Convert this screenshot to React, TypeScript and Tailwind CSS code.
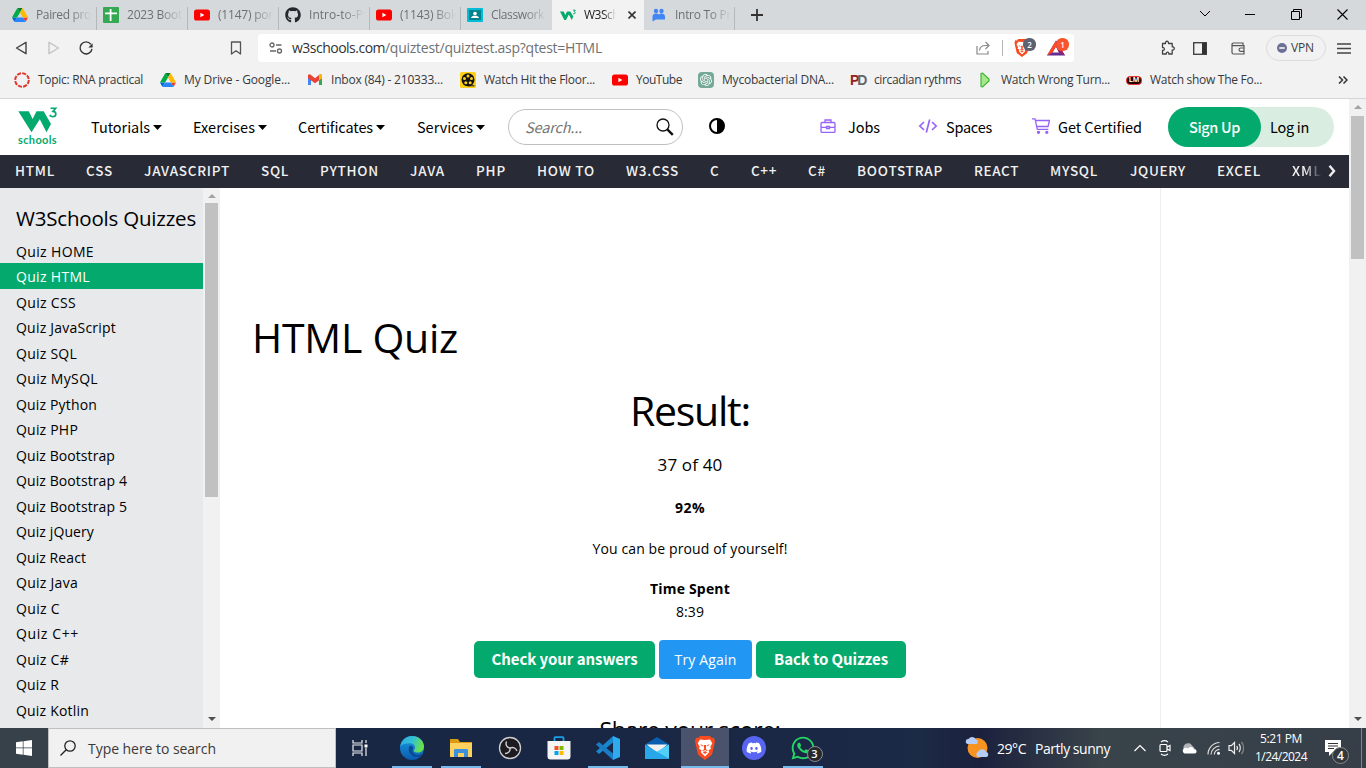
import React, { useLayoutEffect, useRef, useState } from "react";
import { FaGithub, FaDiscord, FaWhatsapp } from "react-icons/fa";
import { SiOpenai } from "react-icons/si";

const UI = "font-['Open_Sans','Noto_Sans',sans-serif]";
const SRC = "font-['Noto_Sans_CJK_SC','Noto_Sans',sans-serif]";

/* Single-line label whose tracking is adjusted so that it fills a given width. */
function T({ w, c = "", children }: { w: number; c?: string; children: string }) {
  const ref = useRef<HTMLSpanElement>(null);
  const [ls, setLs] = useState<number | null>(null);
  useLayoutEffect(() => {
    const el = ref.current;
    if (!el || ls !== null) return;
    setLs((w - el.getBoundingClientRect().width) / children.length);
  }, [ls, w, children]);
  return (
    <span className="block shrink-0 overflow-visible whitespace-nowrap" style={{ width: w }}>
      <span ref={ref} className={`block w-max whitespace-nowrap ${c}`} style={ls === null ? undefined : { letterSpacing: ls }}>
        {children}
      </span>
    </span>
  );
}

const Drive = () => (
  <svg viewBox="0 0 87.3 78" className="h-[14px] w-4 shrink-0">
    <path fill="#0066da" d="m6.6 66.85 3.85 6.65c.8 1.4 1.95 2.5 3.3 3.3l13.75-23.8h-27.5c0 1.55.4 3.1 1.2 4.5z" />
    <path fill="#00ac47" d="m43.65 25-13.75-23.8c-1.35.8-2.5 1.9-3.3 3.3l-25.4 44a9.06 9.06 0 0 0 -1.2 4.5h27.5z" />
    <path fill="#ea4335" d="m73.55 76.8c1.35-.8 2.5-1.9 3.3-3.3l1.6-2.75 7.65-13.25c.8-1.4 1.2-2.95 1.2-4.5h-27.502l5.852 11.5z" />
    <path fill="#00832d" d="m43.65 25 13.75-23.8c-1.35-.8-2.9-1.2-4.5-1.2h-18.5c-1.6 0-3.15.45-4.5 1.2z" />
    <path fill="#2684fc" d="m59.8 53h-32.3l-13.75 23.8c1.35.8 2.9 1.2 4.5 1.2h50.8c1.6 0 3.15-.45 4.5-1.2z" />
    <path fill="#ffba00" d="m73.4 26.5-12.7-22c-.8-1.4-1.95-2.5-3.3-3.3l-13.75 23.8 16.15 28h27.45c0-1.55-.4-3.1-1.2-4.5z" />
  </svg>
);
const YouTube = () => (
  <svg viewBox="0 0 16 16" className="h-4 w-4 shrink-0"><rect y="2.5" width="16" height="11" rx="2.6" fill="#f00" /><path d="M6.4 5.7v4.6L10.4 8z" fill="#fff" /></svg>
);
const Sheets = () => (
  <svg viewBox="0 0 16 16" className="h-4 w-4 shrink-0"><rect width="16" height="16" rx="1" fill="#34a853" /><path d="M2 6.300h12M7.600 2v12" stroke="#fff" strokeWidth="1.800" /></svg>
);
const Classroom = () => (
  <svg viewBox="0 0 16 16" className="h-4 w-4 shrink-0"><rect y="1" width="16" height="14" rx="1" fill="#00bcd4" /><rect x="2" y="3" width="12" height="10" fill="#00838f" /><circle cx="8" cy="6.5" r="1.8" fill="#fff" /><path d="M4 11c.3-1.700 2-2.300 4-2.300s3.700.6 4 2.300z" fill="#fff" /></svg>
);
const W3Fav = () => (
  <svg viewBox="0 0 16 16" className="h-4 w-4 shrink-0"><path d="M0 4.500h3.700L5.300 8 7 4.500h3.200L13.300 9.500 11.800 13 8.800 7.500 6 13H4.300z" fill="#04aa6d" /><path d="M13 3.200h2.300l-1.200 1.500c1.600.1 1.500 2.100.1 2.100-.7 0-1.100-.3-1.300-.6" fill="none" stroke="#04aa6d" strokeWidth="1" /></svg>
);
const People = () => (
  <svg viewBox="0 0 16 16" className="h-4 w-4 shrink-0" fill="#4285f4"><circle cx="5" cy="4" r="2.200" /><circle cx="10.500" cy="4" r="2.200" /><path d="M1.500 9.500c0-2 1.500-3 3.500-3s2.500.7 2.800 1.200c.4-.5 1-1.200 2.800-1.200s3.400 1 3.400 3V12.500H5l-3.500 2z" /></svg>
);
const Lion = ({ c }: { c: string }) => (
  <svg viewBox="0 0 20 24" className={c}><path d="M5 0h10l1.800 2L19 1.800 20 5l-.5 2.500-2.200 10c-.3 1-.8 1.600-1.600 2.200L10 24l-5.700-4.300c-.8-.6-1.300-1.200-1.600-2.200L.5 7.500 0 5l1-3.200 2.200.2z" fill="#fb4a1e" /><path d="M10 4l5-.5 2.300 3.800-2 3.500.7 2-2.500 1.500.7 2L10 20.500 5.800 16.300l.7-2L4 12.800l.7-2-2-3.500L5 3.500z" fill="#fff" /><path d="M5 8l3 1.200-.5 1.300zM15 8l-3 1.200.5 1.300zM8.800 9h2.400l-.3 4L13 15l-3-.8L7 15l2.100-2zM7.500 16l2.500-.8 2.500.8-2.500 2z" fill="#fb4a1e" /></svg>
);

const tabs: { icon: React.ReactNode; text: string; w: number }[] = [
  { icon: <Drive />, text: "Paired prog", w: 61 },
  { icon: <Sheets />, text: "2023 Boot", w: 55 },
  { icon: <YouTube />, text: "(1147) por", w: 55 },
  { icon: <FaGithub className="h-4 w-4 shrink-0 text-[#24292f]" />, text: "Intro-to-Py", w: 60 },
  { icon: <YouTube />, text: "(1143) Bok", w: 57 },
  { icon: <Classroom />, text: "Classwork", w: 53 },
];
const fade = "h-full flex items-center overflow-hidden pb-px [mask-image:linear-gradient(to_right,black_60%,transparent)]";

function TabBar() {
  return (
    <div className="flex h-[30px] shrink-0 bg-[#d5d9dc] pl-1.5">
      {tabs.map((t, i) => (
        <div key={i} className="flex w-[91px] items-center pl-1.5">
          {t.icon}
          <div className={`${fade} ml-2 w-[56px] text-[#6c7074]`}><T w={t.w} c="text-[12px]">{t.text}</T></div>
          <div className={i === 5 ? "" : "ml-auto mt-[7px] h-[23px] w-px self-start bg-[#b4b8bb]"} />
        </div>
      ))}
      <div className="flex w-[92px] items-center bg-[#f2f2f2] pl-2">
        <W3Fav />
        <div className={`${fade} ml-2 w-8 text-[#222]`}><T w={42} c="text-[12px]">W3Scho</T></div>
        <svg viewBox="0 0 8 8" className="ml-3 h-2 w-2" stroke="#333" strokeWidth="1.600"><path d="M.5.5l7 7M7.500.5l-7 7" /></svg>
      </div>
      <div className="flex w-[91px] items-center pl-[7px]">
        <People />
        <div className={`${fade} ml-2 w-[56px] text-[#6c7074]`}><T w={63} c="text-[12px]">Intro To Pro</T></div>
        <div className="ml-auto mt-[7px] h-[23px] w-px self-start bg-[#b4b8bb]" />
      </div>
      <svg viewBox="0 0 12 12" className="ml-[16px] mt-[9px] h-3 w-3" stroke="#333" strokeWidth="1.800"><path d="M6 0v12M0 6h12" /></svg>
      <div className="ml-auto mt-[8px] flex h-3 items-center text-black">
        <svg viewBox="0 0 12 12" className="mr-[34px] h-3 w-3" fill="none" stroke="currentColor"><path d="M1 3l5 5 5-5" /></svg>
        <svg viewBox="0 0 10 10" className="mr-[36px] h-2.5 w-2.5" stroke="currentColor"><path d="M0 5.500h10" /></svg>
        <svg viewBox="0 0 11 11" className="mr-[35px] h-[11px] w-[11px]" fill="none" stroke="currentColor"><path d="M.5 2.500h8v8h-8zM2.500 2.500v-2h8v8h-2" /></svg>
        <svg viewBox="0 0 11 11" className="mr-[18px] h-[11px] w-[11px]" stroke="currentColor" strokeWidth="1.100"><path d="M.5.5l10 10M10.500.5l-10 10" /></svg>
      </div>
    </div>
  );
}

function Toolbar() {
  return (
    <div className="flex h-[36px] shrink-0 items-center text-[#3b3f43]">
      <svg viewBox="0 0 14 16" className="ml-[15px] h-4 w-[14px]" fill="none" stroke="#444" strokeWidth="1.400" strokeLinejoin="round"><path d="M1.500 8L11 2.300v11.400z" /></svg>
      <svg viewBox="0 0 14 16" className="ml-[18px] h-4 w-[14px]" fill="none" stroke="#c4c4c4" strokeWidth="1.400" strokeLinejoin="round"><path d="M2 2.300L11.500 8 2 13.700z" /></svg>
      <svg viewBox="0 0 16 16" className="ml-[17px] h-4 w-4" fill="none" stroke="#333" strokeWidth="1.400"><path d="M12.800 4.200A6 6 0 1 0 14 8.800" /><path d="M14.600 3.300v4.200h-4.200z" fill="#333" stroke="none" /></svg>
      <svg viewBox="0 0 12 14" className="ml-[136px] h-[14px] w-3" fill="none" stroke="#555" strokeWidth="1.300" strokeLinejoin="round"><path d="M1.500 1h9v12L6 9.800 1.500 13z" /></svg>
      <div className="ml-4 flex h-7 w-[816px] items-center rounded bg-white">
        <svg viewBox="0 0 14 12" className="ml-[11px] h-3 w-[14px]" fill="none" stroke="#666" strokeWidth="1.300"><circle cx="3" cy="3" r="2" /><path d="M7 3h5.500M1 9h6" /><circle cx="10.500" cy="9" r="2" /></svg>
        <div className="ml-[9px] flex pb-px text-[14px]">
          <T w={93} c="text-[#303336]">w3schools.com</T>
          <T w={217} c="text-[#6f7275]">/quiztest/quiztest.asp?qtest=HTML</T>
        </div>
        <svg viewBox="0 0 14 14" className="ml-[374px] h-[14px] w-[14px]" fill="none" stroke="#888" strokeWidth="1.200"><path d="M1 5v8h11V10M3.500 9.500c.3-3 2.500-5 6-5H13M9.500 1L13 4.500 9.500 8" /></svg>
        <div className="ml-3 h-4 w-px bg-[#b5b5b5]" />
        <div className="relative ml-[11px] h-[18px] w-[18px]">
          <Lion c="h-[18px] w-4" />
          <span className="absolute -top-px left-[9px] flex h-[13px] w-[13px] items-center justify-center rounded-md bg-[#5d6170] text-[8px] font-semibold text-white">2</span>
        </div>
        <div className="relative ml-[15px] h-[18px] w-[18px]">
          <svg viewBox="0 0 18 18" className="h-[18px] w-[18px]"><path d="M9 1.500L0 16.500h18L14 10l-5-8.500zM9 7.500l3 6H5.500z" fill="#662d91" fillRule="evenodd" /><path d="M9 1.500L0 16.500l5.500-3L9 7.500z" fill="#ff4724" /><path d="M9 1.500L18 16.500l-6-3-3-6z" fill="#9e1f63" /></svg>
          <span className="absolute -top-px left-[9px] flex h-[13px] w-[13px] items-center justify-center rounded-md bg-[#fb542b] text-[8px] font-semibold text-white">1</span>
        </div>
      </div>
      <svg viewBox="0 0 16 16" className="ml-[86px] h-4 w-4" fill="none" stroke="#444" strokeWidth="1.300" strokeLinejoin="round"><path d="M2.500 3.500h3c-.6-3 3.600-3 3 0h3.700v3.300c2.800-.5 2.800 3.700 0 3.200v4H8.800c.4-2.500-2.900-2.500-2.500 0H2.500v-3.500c2.500.3 2.500-3.300 0-3z" /></svg>
      <svg viewBox="0 0 14 13" className="ml-[17px] h-[13px] w-[14px]"><rect x=".7" y=".7" width="12.600" height="11.600" fill="none" stroke="#444" strokeWidth="1.400" /><path d="M9 1h4.500v11H9z" fill="#333" /></svg>
      <svg viewBox="0 0 14 13" className="ml-[24px] h-[13px] w-[14px]" fill="none" stroke="#555" strokeWidth="1.200"><path d="M12 3.500V1H2.300a1.300 1.300 0 0 0 0 2.600H13V12H2.500A1.500 1.500 0 0 1 1 10.500V2.500M13.500 6H9.700a1.600 1.600 0 0 0 0 3.300h3.800" /></svg>
      <div className="ml-[21px] flex h-[26px] w-[60px] items-center rounded-full border border-[#dcdcdc] pl-[10px]">
        <svg viewBox="0 0 10 10" className="h-[10px] w-[10px]"><circle cx="5" cy="5" r="5" fill="#6b7095" /><path d="M2.300 5h5.400" stroke="#fff" strokeWidth="1.500" /></svg>
        <div className="ml-1"><T w={23} c="text-[12px]">VPN</T></div>
      </div>
      <svg viewBox="0 0 14 11" className="ml-[11px] h-[11px] w-[14px]" stroke="#444" strokeWidth="1.300"><path d="M0 1h14M0 5.500h14M0 10h14" /></svg>
    </div>
  );
}

const marks: { icon: React.ReactNode; text: string; w: number; cell: string }[] = [
  { icon: <svg viewBox="0 0 16 16" className="h-4 w-4"><circle cx="8" cy="8" r="6.800" fill="none" stroke="#e0352b" strokeWidth="2" strokeDasharray="4.100 1.240" /></svg>, text: "Topic: RNA practical", w: 105, cell: "w-[146px]" },
  { icon: <Drive />, text: "My Drive - Google...", w: 106, cell: "w-[147px]" },
  { icon: <svg viewBox="0 0 16 16" className="h-4 w-4"><path d="M1 3.500v9.500h3V7z" fill="#4285f4" /><path d="M12 13h3V3.500L12 7z" fill="#34a853" /><path d="M1 3v3.300l7 5 7-5V3c-1-1.200-2-.8-2.700-.2L8 6.200 3.700 2.800C2.800 2 1.500 2 1 3z" fill="#ea4335" /><path d="M12 3l1-.600c1-.4 2 .2 2 1.300v2.500l-3 2.300z" fill="#fbbc04" /></svg>, text: "Inbox (84) - 210333...", w: 112, cell: "w-[153px]" },
  { icon: <svg viewBox="0 0 16 16" className="h-4 w-4"><rect width="16" height="16" rx="1.500" fill="#fdd017" /><circle cx="8" cy="7.800" r="6.500" fill="#111" /><g fill="#fdd017"><circle cx="8" cy="4" r="1.500" /><circle cx="4.500" cy="6.600" r="1.500" /><circle cx="11.500" cy="6.600" r="1.500" /><circle cx="5.800" cy="10.800" r="1.500" /><circle cx="10.200" cy="10.800" r="1.500" /></g><path d="M8 13.300h6.500v1H8z" fill="#111" /></svg>, text: "Watch Hit the Floor...", w: 111, cell: "w-[152px]" },
  { icon: <YouTube />, text: "YouTube", w: 46, cell: "w-[86px]" },
  { icon: <span className="flex h-4 w-4 items-center justify-center rounded-sm bg-[#74a897]"><SiOpenai className="h-3 w-3 text-white" /></span>, text: "Mycobacterial DNA...", w: 112, cell: "w-[152px]" },
  { icon: <span className="flex h-4 w-4 items-center text-[14px] leading-none font-black tracking-[-2px] font-['Liberation_Sans',sans-serif]"><i className="not-italic text-[#98201c]">P</i><i className="not-italic text-[#666]">D</i></span>, text: "circadian rythms", w: 87, cell: "w-[127px]" },
  { icon: <svg viewBox="0 0 16 16" className="h-4 w-4"><path d="M4 1.500l1.500-.5L12 7v2l-6.500 6L4 14.500z" fill="#a5e887" stroke="#35b135" strokeWidth="1.100" /></svg>, text: "Watch Wrong Turn...", w: 109, cell: "w-[149px]" },
  { icon: <span className="flex h-[9px] w-4 items-center justify-center rounded-sm border border-[#e33] bg-[#200] text-[7px] font-bold text-white">LM</span>, text: "Watch show The Fo...", w: 112, cell: "w-[212px]" },
];

function Bookmarks() {
  return (
    <div className="flex h-[28px] shrink-0 items-center pl-[14px] text-[#37393c]">
      {marks.map((m, i) => (
        <div key={i} className={`${m.cell} flex shrink-0 items-center gap-2`}>
          {m.icon}
          <div className="pb-px"><T w={m.w} c="text-[12px]">{m.text}</T></div>
        </div>
      ))}
      <svg viewBox="0 0 10 8" className="h-2 w-2.5" fill="none" stroke="#333" strokeWidth="1.500"><path d="M1 .5L4.500 4 1 7.500M5.500.5L9 4 5.500 7.500" /></svg>
    </div>
  );
}

const Caret = () => <svg viewBox="0 0 9 5" className="ml-[3px] mt-px h-[5px] w-[9px]"><path d="M0 0h9L4.500 5z" /></svg>;
const menus: [string, number, string][] = [
  ["Tutorials", 59, "w-[102px]"],
  ["Exercises", 62, "w-[105px]"],
  ["Certificates", 75, "w-[119px]"],
  ["Services", 56, "w-[91px]"],
];

function SiteNav() {
  return (
    <div className={`${SRC} flex h-[56px] w-full shrink-0 items-center bg-white text-[14.500px] text-black`}>
      <div className="ml-[18px] flex w-[73px] flex-col pb-0.5">
        <svg viewBox="0 0 40 26" className="h-[26px] w-10"><path d="M.3 4.300h10.500l3.800 7.700 3.900-7.700h7.200L33 17l-4.500 8.300L21.800 12.300 13.500 25.300z" fill="#04aa6d" /><path d="M32.500 1.200h5.200l-2.800 3.200c4.200.3 3.700 5.300-.1 5.300-1.700 0-2.600-.8-3.100-1.700" fill="none" stroke="#04aa6d" strokeWidth="1.600" /></svg>
        <T w={39} c="font-['Lato',sans-serif] text-[11px] leading-[13px] font-bold text-[#04aa6d]">schools</T>
      </div>
      {menus.map(([t, w, cell]) => (
        <div key={t} className={`${cell} flex shrink-0 items-center`}><T w={w}>{t}</T><Caret /></div>
      ))}
      <div className="flex h-9 w-[175px] items-center justify-between rounded-full border border-[#bfbfbf] pr-2 pl-4">
        <T w={57} c="text-[#757575] italic">Search...</T>
        <svg viewBox="0 0 18 18" className="h-[18px] w-[18px]" fill="none" stroke="#111"><circle cx="7" cy="7" r="6" strokeWidth="1.300" /><path d="M11.300 11.300l5.500 5.500" strokeWidth="2.400" /></svg>
      </div>
      <svg viewBox="0 0 16 16" className="mb-[3px] ml-[26px] h-4 w-4"><circle cx="8" cy="8" r="7" fill="none" stroke="#000" strokeWidth="2" /><path d="M8 1a7 7 0 0 1 0 14z" /></svg>
      <svg viewBox="0 0 16 14" className="mb-[3px] ml-[95px] h-[14px] w-4" fill="none" stroke="#9763f6" strokeWidth="1.300"><rect x="1" y="3.500" width="14" height="10" rx="1.200" /><path d="M5 3.500V1h6v2.500M1 8.300h5.500M9.500 8.300H15M6.500 7.500h3v2h-3z" /></svg>
      <div className="ml-[12px] w-[70px]"><T w={32}>Jobs</T></div>
      <svg viewBox="0 0 20 14" className="mb-[3px] h-[14px] w-5" fill="none" stroke="#9763f6" strokeWidth="1.700"><path d="M6 3L1.800 7 6 11M14 3l4.200 4-4.200 4M11.700.5l-3.400 13" /></svg>
      <div className="ml-[8px] w-[86px]"><T w={46}>Spaces</T></div>
      <svg viewBox="0 0 18 16" className="mb-[2px] h-4 w-[18px]" fill="none" stroke="#9763f6" strokeWidth="1.300"><path d="M0 .8h3l2.300 10.500h11M3.500 2.500h14L16 8.500H4.800" /><circle cx="6.500" cy="14.300" r="1" fill="#9763f6" /><circle cx="14.800" cy="14.300" r="1" fill="#9763f6" /></svg>
      <div className="ml-[8px] w-[110px]"><T w={84}>Get Certified</T></div>
      <div className="flex h-10 w-[166px] rounded-full bg-[#d9eee1]">
        <div className="flex w-[93px] items-center rounded-full bg-[#04aa6d] pl-[21px] font-medium text-white"><T w={51}>Sign Up</T></div>
        <div className="flex items-center pl-[9px]"><T w={39}>Log in</T></div>
      </div>
    </div>
  );
}

const topics: [string, number, string][] = [
  ["HTML", 40, "w-[71px]"], ["CSS", 27, "w-[58px]"], ["JAVASCRIPT", 86, "w-[117px]"], ["SQL", 28, "w-[59px]"],
  ["PYTHON", 59, "w-[90px]"], ["JAVA", 35, "w-[66px]"], ["PHP", 30, "w-[61px]"], ["HOW TO", 58, "w-[89px]"],
  ["W3.CSS", 53, "w-[84px]"], ["C", 9, "w-[41px]"], ["C++", 26, "w-[57px]"], ["C#", 18, "w-[49px]"],
  ["BOOTSTRAP", 86, "w-[117px]"], ["REACT", 45, "w-[76px]"], ["MYSQL", 48, "w-[80px]"], ["JQUERY", 56, "w-[87px]"],
  ["EXCEL", 44, "w-[75px]"],
];

function TopicBar() {
  return (
    <div className={`${SRC} flex h-[33px] w-full shrink-0 items-center overflow-hidden bg-[#282a35] pb-0.5 pl-[15px] text-[13.500px] font-medium text-[#f1f1f1]`}>
      {topics.map(([t, w, cell]) => <div key={t} className={`${cell} shrink-0`}><T w={w}>{t}</T></div>)}
      <div className="w-[30px] shrink-0 overflow-hidden [mask-image:linear-gradient(to_right,black_40%,transparent)]"><T w={30}>XML</T></div>
      <svg viewBox="0 0 8 12" className="ml-1.5 h-3 w-2 shrink-0" fill="none" stroke="#eee" strokeWidth="2.400"><path d="M1.500.8L6 6l-4.500 5.200" /></svg>
    </div>
  );
}

const quizzes: [string, number][] = [
  ["Quiz HOME", 78], ["Quiz HTML", 74], ["Quiz CSS", 60], ["Quiz JavaScript", 100], ["Quiz SQL", 61], ["Quiz MySQL", 82],
  ["Quiz Python", 81], ["Quiz PHP", 62], ["Quiz Bootstrap", 99], ["Quiz Bootstrap 4", 111], ["Quiz Bootstrap 5", 111],
  ["Quiz jQuery", 78], ["Quiz React", 70], ["Quiz Java", 62], ["Quiz C", 44], ["Quiz C++", 63], ["Quiz C#", 53],
  ["Quiz R", 43], ["Quiz Kotlin", 73], ["Quiz Sass", 64],
];

function Scrollbar({ thumb }: { thumb: string }) {
  return (
    <div className="flex w-[17px] shrink-0 flex-col items-center bg-[#f1f1f1]">
      <svg viewBox="0 0 8 4" className="mt-[6px] mb-[5px] h-1 w-2 shrink-0" fill="#a3a3a3"><path d="M0 4h8L4 0z" /></svg>
      <div className={`w-[13px] shrink-0 bg-[#c1c1c1] ${thumb}`} />
      <svg viewBox="0 0 8 4" className="mt-auto mb-[7px] h-1 w-2 shrink-0" fill="#505050"><path d="M0 0h8L4 4z" /></svg>
    </div>
  );
}

function Sidebar() {
  return (
    <div className="w-[203px] shrink-0 overflow-hidden bg-[#e7e9eb] text-black">
      <div className="flex h-[49.500px] items-end pb-[5px] pl-4"><T w={180} c="text-[20.500px] leading-[30px]">W3Schools Quizzes</T></div>
      {quizzes.map(([t, w], i) => (
        <div key={t} className={`flex h-[25.500px] items-center pt-[1.500px] pl-4 ${i === 1 ? "bg-[#04aa6d] text-white" : ""}`}>
          <T w={w} c="text-[14px]">{t}</T>
        </div>
      ))}
    </div>
  );
}

function Content() {
  return (
    <div className="flex w-[941px] shrink-0 flex-col items-center overflow-hidden border-r border-[#eee] text-[14px] text-black">
      <div className="mt-[120px] flex h-[60px] w-full shrink-0 items-center pl-8"><T w={206} c="text-[41px]">HTML Quiz</T></div>
      <div className="mt-[13px] flex h-[60px] shrink-0 items-center"><T w={120} c="text-[41px]">Result:</T></div>
      <div className="mt-[9px] flex h-[30px] shrink-0 items-center"><T w={65} c="text-[17px]">37 of 40</T></div>
      <div className="mt-[15px] flex h-6 shrink-0 items-center font-bold"><T w={30}>92%</T></div>
      <div className="mt-[17px] flex h-6 shrink-0 items-center"><T w={195}>You can be proud of yourself!</T></div>
      <div className="mt-[17px] flex h-[22px] shrink-0 items-center font-bold"><T w={80}>Time Spent</T></div>
      <div className="mt-px flex h-[22px] shrink-0 items-center"><T w={28}>8:39</T></div>
      <div className="mt-[18px] flex h-[39px] shrink-0 items-center gap-1 text-white">
        <div className={`${SRC} flex h-[37px] w-[181px] items-center justify-center rounded-[5px] bg-[#04aa6d] text-[15px] font-bold`}><T w={146}>Check your answers</T></div>
        <div className="flex h-[39px] w-[93px] items-center justify-center rounded bg-[#2196f3]"><T w={62}>Try Again</T></div>
        <div className={`${SRC} flex h-[37px] w-[150px] items-center justify-center rounded-[5px] bg-[#04aa6d] text-[15px] font-bold`}><T w={114}>Back to Quizzes</T></div>
      </div>
      <div className="mt-[36px] flex h-[30px] shrink-0 items-center"><T w={181} c="text-[23px]">Share your score:</T></div>
    </div>
  );
}

const taskIcons: { icon: React.ReactNode; open?: boolean; active?: boolean }[] = [
  { icon: <svg viewBox="0 0 16 16" className="h-4 w-4" fill="none" stroke="#eee" strokeWidth="1.200"><path d="M1 0v3h9V0M1 5h9v6H1zM1 16v-3h9v3M14 0v3M14 8v8" /><path d="M12.500 4.500h3v3h-3z" fill="#fff" stroke="none" /></svg> },
  { icon: <svg viewBox="0 0 24 24" className="h-6 w-6"><defs><linearGradient id="eg" x1="0" y1="0" x2="1" y2=".3"><stop offset="0" stopColor="#2aa8e8" /><stop offset=".55" stopColor="#35c1d0" /><stop offset="1" stopColor="#66e04e" /></linearGradient><linearGradient id="eb" x1="0" y1="0" x2="0" y2="1"><stop offset="0" stopColor="#1b9de2" /><stop offset="1" stopColor="#0a5bb0" /></linearGradient></defs><circle cx="12" cy="12" r="12" fill="url(#eb)" /><path d="M.2 10.500C1.500 4 6.500 0 12 0c7 0 12 5 12 10.500 0 4-3 6-6 6-2.500 0-4.300-.9-4.300-1.800 0-.8 1.300-1.200 1.300-3.200 0-2.200-2-4.300-5.500-4.300C5.500 7.200 2 8 .2 10.500z" fill="url(#eg)" /><path d="M9 11c-1.500 5 2.500 10.500 9 10 1.500-.2 3-.7 4-1.500 1-1 .3-1.700-.5-1.300-4 1.800-8.700.3-9-3-.1-2 1-2.700.3-4.200-.8-1.700-3-1.500-3.800 0z" fill="#0b4a98" /></svg>, open: true },
  { icon: <svg viewBox="0 0 22 19" className="h-[19px] w-[22px]"><path d="M0 0h8l2 3h12v15H0z" fill="#d99a12" /><path d="M0 4h22v14H0z" fill="#fcd160" /><path d="M4 18v-6.500C4 10.500 4.500 10 5.500 10h11c1 0 1.500.5 1.500 1.500V18h-4v-4H8v4z" fill="#3b91dc" /></svg>, open: true },
  { icon: <svg viewBox="0 0 24 24" className="h-6 w-6"><circle cx="12" cy="12" r="10.500" fill="#1d1b20" stroke="#cfcfcf" strokeWidth="1.300" /><g fill="none" stroke="#cfcfcf" strokeWidth="1.400"><path d="M12 12c-3-.5-4.800-3-3.500-6.500" /><path d="M12 12c3-1.300 6-.2 7 3" /><path d="M12 12c.5 3-1.500 5.500-5 5.500" /></g></svg> },
  { icon: <svg viewBox="0 0 24 24" className="h-6 w-6"><path d="M7.500 6V2c0-.5.300-.8.800-.8h7.400c.5 0 .8.300.8.800v4" fill="none" stroke="#1aa0e8" strokeWidth="1.800" /><path d="M.5 5h23v15.500a3 3 0 0 1-3 3h-17a3 3 0 0 1-3-3z" fill="#f5f5f5" /><path d="M7.500 10h4v4h-4z" fill="#f25022" /><path d="M12.500 10h4v4h-4z" fill="#7fba00" /><path d="M7.500 15h4v4h-4z" fill="#00a4ef" /><path d="M12.500 15h4v4h-4z" fill="#ffb900" /></svg> },
  { icon: <svg viewBox="0 0 24 24" className="h-6 w-6"><path d="M17 0l7 3v18l-7 3z" fill="#2eaaf0" /><path d="M17 0v6.500L3 18 0 15.500z" fill="#1787d0" /><path d="M17 24v-6.500L3 6 0 8.500z" fill="#1a7cc4" /></svg>, open: true },
  { icon: <svg viewBox="0 0 24 24" className="h-6 w-6"><path d="M0 8.500L12 1l12 7.500v4H0z" fill="#0c5eaf" /><path d="M1.500 8.500h21L12 17z" fill="#f2f2f2" /><path d="M0 8.500L24 23H0z" fill="#28a8ea" /><path d="M24 8.500V23L11.500 15.700z" fill="#50d0f8" /><path d="M24 23H0l11.500-7.300z" fill="#28a8ea" /></svg> },
  { icon: <Lion c="h-6 w-5" />, active: true },
  { icon: <span className="flex h-6 w-6 items-center justify-center rounded-full bg-[#5865f2]"><FaDiscord className="h-4 w-4 text-white" /></span> },
  { icon: <div className="relative"><FaWhatsapp className="h-[26px] w-[26px] text-[#25d366]" /><span className="absolute top-[11px] left-[17px] flex h-4 w-4 items-center justify-center rounded-full border border-[#8a8a8a] bg-[#25282e] text-[11px] font-semibold text-white">3</span></div>, open: true },
];

function Taskbar() {
  return (
    <div className="flex h-10 shrink-0 items-stretch bg-[linear-gradient(to_right,#37414a_0,#37414a_48px,#182744_336px,#1a2745_800px,#1b2a45_920px,#1b213d_980px,#39434a_1100px,#363f48_1366px)] text-white">
      <div className="flex w-12 items-center justify-center">
        <svg viewBox="0 0 16 16" className="h-4 w-4" fill="#fff"><path d="M0 2.200l6.800-.9v6.300H0zM7.500 1.200L16 0v7.600H7.500zM0 8.300h6.800v6.400L0 13.800zM7.500 8.300H16V16l-8.500-1.200z" /></svg>
      </div>
      <div className="flex w-72 items-center border border-[#bfbfbf] bg-[#f1f1f1] pl-[11px] text-[#3a3a3a]">
        <svg viewBox="0 0 16 16" className="h-4 w-4" fill="none" stroke="#222" strokeWidth="1.300"><circle cx="10" cy="6" r="5.200" /><path d="M6.200 9.800L.5 15.500" /></svg>
        <div className="ml-3"><T w={128} c="text-[14px]">Type here to search</T></div>
      </div>
      {taskIcons.map((t, i) => (
        <div key={i} className={`flex shrink-0 flex-col items-center ${i === 0 ? "mr-[3px] w-12" : i === 7 ? "w-12" : "w-[49px]"} ${t.active ? "bg-[#4a536b]" : ""}`}>
          <div className="flex h-[38px] items-center pt-0.5">{t.icon}</div>
          {(t.open || t.active) && <div className={`h-0.5 bg-[#76b9ed] ${t.active ? "w-full" : "w-10"}`} />}
        </div>
      ))}
      <div className="ml-[138px] flex items-center">
        <svg viewBox="0 0 24 24" className="h-6 w-6"><circle cx="12.500" cy="12" r="10" fill="#f79421" /><path d="M3 8a2.500 2.500 0 0 1 .5-5A4.200 4.200 0 0 1 11 3.500 2.500 2.500 0 0 1 11.500 8z" fill="#b5cdf5" /><path d="M13 21a3 3 0 0 1 .3-5.500 4.500 4.500 0 0 1 8 .5A2.600 2.600 0 0 1 21.500 21z" fill="#b5cdf5" /></svg>
        <div className="ml-2 w-[38px]"><T w={29} c="text-[14px]">29°C</T></div>
        <T w={75} c="text-[14px]">Partly sunny</T>
        <svg viewBox="0 0 12 8" className="ml-[24px] h-2 w-3" fill="none" stroke="#fff" strokeWidth="1.200"><path d="M.5 7L6 1.500 11.500 7" /></svg>
        <svg viewBox="0 0 12 16" className="ml-[13px] h-4 w-3" fill="none" stroke="#fff" strokeWidth="1.200"><rect x="1" y="4.500" width="7" height="7" rx="1" /><path d="M8 7l3-1.500v5L8 9M2 2c2-1.500 5-1.500 7 0M2 14c2 1.500 5 1.500 7 0" /></svg>
        <svg viewBox="0 0 16 11" className="ml-[10px] h-[11px] w-4"><path d="M3 7a4.500 4.500 0 0 1 8-4.500l3 3z" fill="#b0b4b8" /><path d="M3.500 10.500a3 3 0 0 1-.3-5.300c1.500-.8 3-.3 3.800.3 1.500-2.300 5-2 6 .5 3 0 3.500 4 .7 4.500z" fill="#fff" /></svg>
        <svg viewBox="0 0 14 14" className="ml-[10px] h-[14px] w-[14px]" fill="none" stroke="#ddd" strokeWidth="1.200"><path d="M1 13.500A12 12 0 0 1 12.500 1.500M4 13.500a9 9 0 0 1 8.500-8.500M7.300 13.500a5.500 5.500 0 0 1 5.200-5.200" /><circle cx="11.500" cy="12.200" r="1.500" fill="#fff" stroke="none" /></svg>
        <svg viewBox="0 0 17 14" className="ml-[7px] h-[14px] w-[17px]" fill="none" stroke="#eee" strokeWidth="1.200"><path d="M1 4.700h2.300L6.500 1.500v11L3.300 9.300H1zM8.700 5c.8 1 .8 3 0 4M11 3c1.700 2 1.700 6 0 8" /><path d="M13.500 1c2.800 3 2.800 9 0 12" stroke="#888" /></svg>
        <div className="ml-[10px] flex w-[52px] flex-col items-center pb-px">
          <T w={42} c="text-[12px] leading-[18px]">5:21 PM</T>
          <T w={52} c="text-[12px] leading-[18px]">1/24/2024</T>
        </div>
        <div className="relative ml-[18px] h-4 w-4">
          <svg viewBox="0 0 16 16" className="h-4 w-4"><path d="M0 0h16v12H8l-4 4v-4H0z" fill="#fff" /><path d="M3 3.500h10M3 6h10M3 8.500h6" stroke="#333" /></svg>
          <span className="absolute top-[7px] left-[7px] flex h-[17px] w-[17px] items-center justify-center rounded-full border border-[#8a8a8a] bg-[#33383d] text-[12px] font-semibold">4</span>
        </div>
        <div className="ml-[20px] h-10 w-px bg-[#7d858c]" />
      </div>
    </div>
  );
}

export default function App() {
  return (
    <div className={`${UI} flex h-[768px] w-[1366px] flex-col overflow-hidden bg-white`}>
      <TabBar />
      <div className="flex h-[69px] shrink-0 flex-col border-b border-[#d3d6d8] bg-[#f2f2f2]">
        <Toolbar />
        <Bookmarks />
      </div>
      <div className="flex h-[629px] shrink-0">
        <div className="flex w-[1349px] flex-col">
          <SiteNav />
          <TopicBar />
          <div className="flex h-[540px]">
            <Sidebar />
            <Scrollbar thumb="h-[294px]" />
            <Content />
          </div>
        </div>
        <Scrollbar thumb="mt-0.5 h-[143px]" />
      </div>
      <Taskbar />
    </div>
  );
}
